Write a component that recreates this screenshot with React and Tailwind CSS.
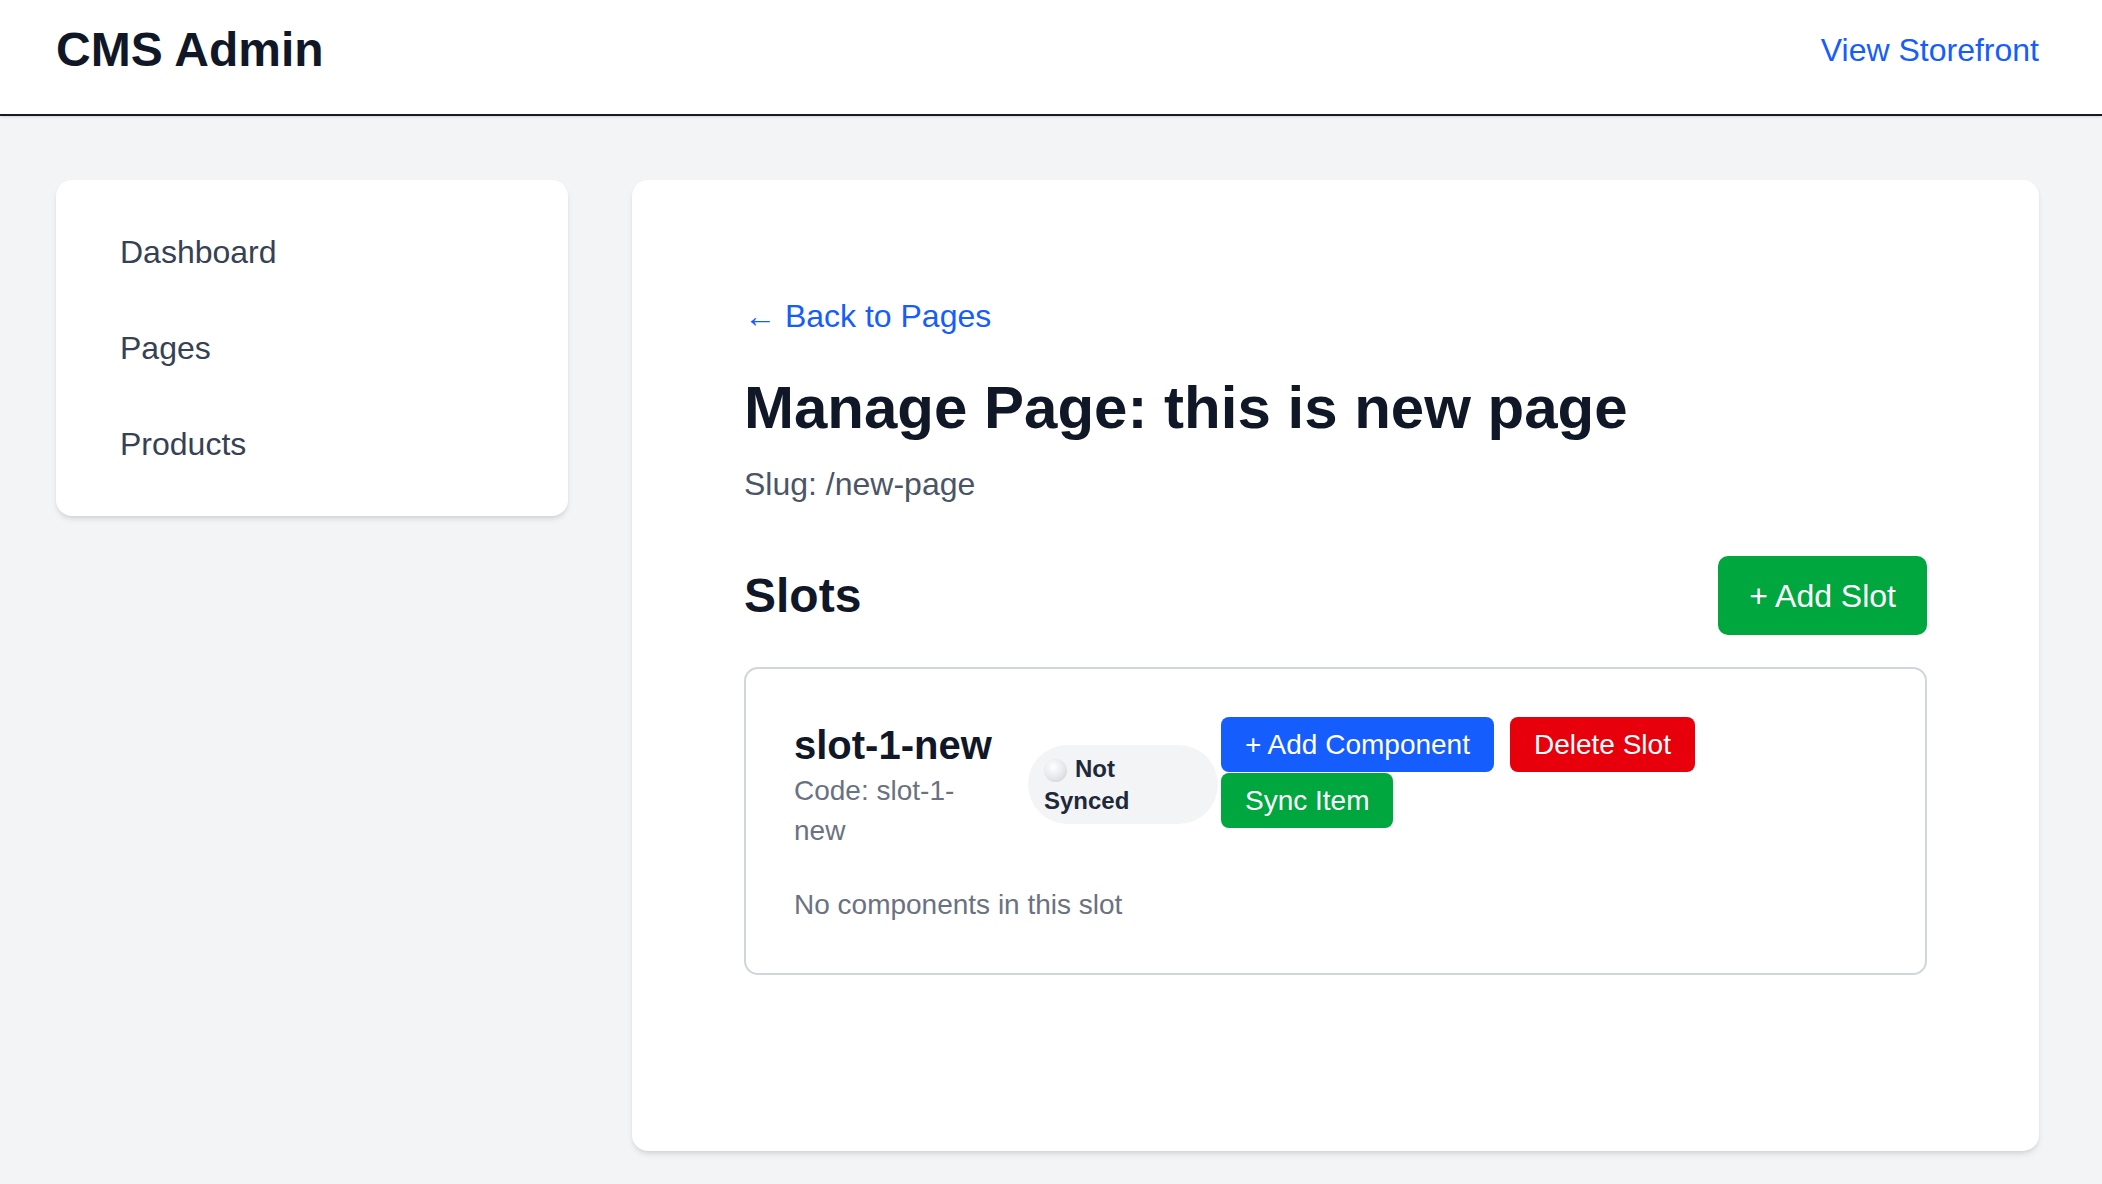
import React from "react";

export default function App() {
  return (
    <div className="min-h-screen bg-[#f3f4f6] font-['Liberation_Sans',Arial,sans-serif]">
      <header className="h-[116px] bg-white border-b-2 border-[#17192b] shadow-sm pl-[56px] pr-[63px] pt-[26px] flex justify-between items-start">
        <h1 className="text-[48px] leading-[48px] font-bold text-[#101828]">CMS Admin</h1>
        <a href="#" className="text-[32px] leading-[48px] text-[#155dfc]">View Storefront</a>
      </header>

      <div className="flex items-start gap-16 pl-[56px] pr-[63px] pt-16 pb-16">
        <nav className="w-[512px] shrink-0 bg-white rounded-2xl shadow-md py-6 px-8">
          {["Dashboard", "Pages", "Products"].map((item) => (
            <a key={item} href="#" className="block px-8 py-6 text-[32px] leading-[48px] text-[#364153]">
              {item}
            </a>
          ))}
        </nav>

        <main className="flex-1 bg-white rounded-2xl shadow-md px-28 pt-28 pb-[176px]">
          <a href="#" className="block text-[32px] leading-[48px] text-[#155dfc]">← Back to Pages</a>
          <h2 className="mt-[38px] text-[60px] leading-[60px] font-bold text-[#101828]">Manage Page: this is new page</h2>
          <p className="mt-[22px] text-[32px] leading-[48px] text-[#4a5565]">Slug: /new-page</p>

          <div className="mt-[48px] flex items-center justify-between">
            <h3 className="text-[48px] leading-[56px] font-bold text-[#101828]">Slots</h3>
            <button className="h-[79px] px-[31px] rounded-[10px] bg-[#00a63e] text-white text-[32px] leading-[48px]">+ Add Slot</button>
          </div>

          <div className="mt-8 border-2 border-[#d1d5dc] rounded-[14px] p-12">
            <div className="flex items-start">
              <div className="flex items-center gap-[36px]">
                <div className="w-[198px]">
                  <div className="pt-[2px] text-[40px] leading-[52px] font-bold text-[#101828] whitespace-nowrap">slot-1-new</div>
                  <div className="text-[28px] leading-[40px] text-[#6a7282]">
                    Code: slot-1-<br />new
                  </div>
                </div>
                <div className="w-[190px] h-[79px] rounded-full bg-[#f3f4f6] px-4 py-[8px] text-[24px] leading-[32px] font-bold text-[#1e2939]">
                  <span className="inline-block align-middle w-[23px] h-[23px] rounded-full mr-2 bg-[radial-gradient(circle_at_40%_35%,#ffffff_0%,#e5e7eb_55%,#c6cad1_100%)]"></span>
                  Not
                  <br />
                  Synced
                </div>
              </div>
              <div className="ml-[3px] w-[480px] flex flex-wrap gap-x-4 gap-y-[1px]">
                <button className="h-[55px] px-6 rounded-lg bg-[#155dfc] text-white text-[28px] leading-[40px] whitespace-nowrap">+ Add Component</button>
                <button className="h-[55px] px-6 rounded-lg bg-[#e7000b] text-white text-[28px] leading-[40px] whitespace-nowrap">Delete Slot</button>
                <button className="h-[55px] px-6 rounded-lg bg-[#00a63e] text-white text-[28px] leading-[40px] whitespace-nowrap">Sync Item</button>
              </div>
            </div>
            <p className="mt-[34px] text-[28px] leading-[40px] text-[#6a7282]">No components in this slot</p>
          </div>
        </main>
      </div>
    </div>
  );
}
